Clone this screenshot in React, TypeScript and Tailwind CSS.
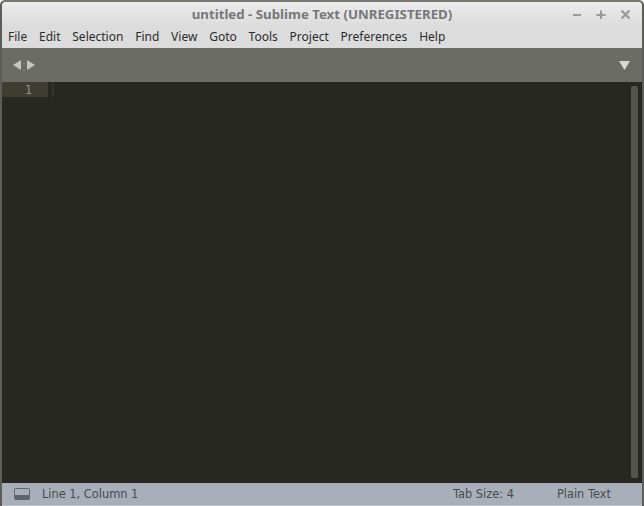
const menus = ['File', 'Edit', 'Selection', 'Find', 'View', 'Goto', 'Tools', 'Project', 'Preferences', 'Help'];

export default function App() {
  return (
    <div className="w-[644px] h-[506px] flex flex-col overflow-hidden bg-[#272822] border-t-2 border-x-2 border-t-[#77776f] border-x-[#5c5c58] rounded-t-[5px] font-['Noto_Sans',sans-serif]">
      {/* title bar */}
      <div className="h-[24px] shrink-0 grid grid-cols-[1fr_auto_1fr] items-center bg-gradient-to-b from-[#ececec] to-[#dcdcdc]">
        <div />
        <span className="text-[13.25px] font-bold text-[#77777a] leading-none pt-[2px]">untitled - Sublime Text (UNREGISTERED)</span>
        <div className="flex items-center justify-end gap-[13px] pr-[11px] pt-[1px]">
          <svg width="11" height="11" viewBox="0 0 11 11"><rect x="1" y="5" width="8" height="2" fill="#999999" /></svg>
          <svg width="11" height="11" viewBox="0 0 11 11"><path d="M4 1.500h2v3.500h3.500v2h-3.500v3h-2v-3h-3.500v-2h3.500z" fill="#999999" /></svg>
          <svg width="11" height="11" viewBox="0 0 11 11"><path d="M1.500 1.500l8 8M9.500 1.500l-8 8" stroke="#999999" strokeWidth="2.200" /></svg>
        </div>
      </div>
      {/* menu bar */}
      <div className="h-[22px] shrink-0 flex items-center gap-[11.8px] pl-[6px] bg-[#dcdcdc] text-[12px] text-[#2c2c2c]">
        {menus.map((m) => (
          <span key={m}>{m}</span>
        ))}
      </div>
      {/* tab strip */}
      <div className="h-[34px] shrink-0 flex items-center justify-between pl-[11px] pr-[12px] bg-[#6b6c66]">
        <div className="flex items-center gap-[6px]">
          <svg width="8" height="10" viewBox="0 0 8 10"><path d="M8 0v10L0 5z" fill="#c4c4c0" /></svg>
          <svg width="8" height="10" viewBox="0 0 8 10"><path d="M0 0v10l8-5z" fill="#c4c4c0" /></svg>
        </div>
        <svg width="11" height="9" viewBox="0 0 11 9"><path d="M0 0h11L5.500 9z" fill="#d8d8d5" /></svg>
      </div>
      {/* editor */}
      <div className="flex-1 min-h-0 flex justify-between">
        <div className="flex items-start">
          <div className="w-[46px] h-[15px] bg-[#3e3d32] text-right pr-[16px] pt-[1px] text-[12px] leading-[15px] text-[#8f908a] font-['DejaVu_Sans_Mono',monospace]">1</div>
          <div className="w-[2px] h-[15px] ml-[4px] bg-[#33342c]" />
        </div>
        <div className="w-[7px] mr-[4px] mt-[4px] mb-[5px] rounded-[2px] bg-[#54554f]" />
      </div>
      {/* status bar */}
      <div className="h-[23px] shrink-0 flex items-center pl-[12px] pt-[1px] bg-[#a8afb9] border-b border-b-[#c2c6cd] text-[11.4px] text-[#474a52] font-['DejaVu_Sans',sans-serif]">
        <svg width="16" height="12" viewBox="0 0 16 12" className="mr-[12px] -mt-[1px]">
          <rect x="0.500" y="0.500" width="15" height="11" rx="1" fill="none" stroke="#5f646d" />
          <rect x="1" y="7" width="14" height="4.500" fill="#5f646d" />
        </svg>
        <span>Line 1, Column 1</span>
        <span className="ml-auto">Tab Size: 4</span>
        <span className="ml-[43px] mr-[31px]">Plain Text</span>
      </div>
    </div>
  );
}
